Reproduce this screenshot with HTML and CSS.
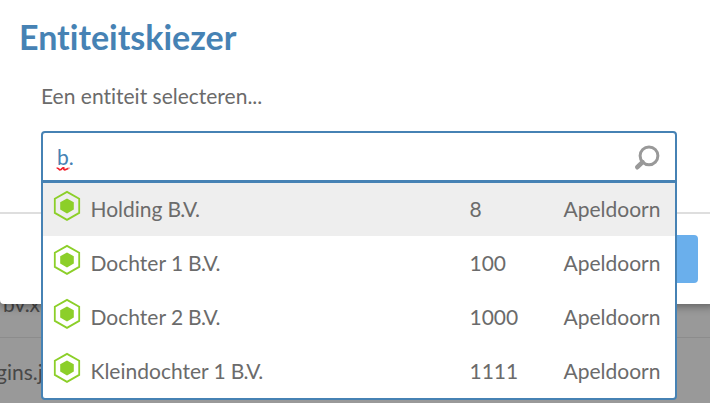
FILE: index.html
```html
<!DOCTYPE html>
<html lang="nl">
<head>
<meta charset="utf-8">
<title>Entiteitskiezer</title>
<link rel="stylesheet" href="styles.css">
</head>
<body>
<svg class="defs" width="0" height="0"><defs>
<symbol id="entity" viewBox="0 0 28 32"><path d="M14 1.9 26.2 8.7V22.9L14 29.9 1.8 22.9V8.7Z" fill="none" stroke="currentColor" stroke-width="1.8"/><path d="M14 8.5 20.8 12.2V19.6L14 23.4 7.2 19.6V12.2Z" fill="currentColor"/></symbol>
</defs></svg>
<div class="page">
  <div class="files">
    <div class="file file-bv"><span>bv.xml</span></div>
    <div class="file"><span>gins.js</span></div>
  </div>
  <section class="dialog">
    <div class="content">
      <h1 class="title">Entiteitskiezer</h1>
      <p class="label">Een entiteit selecteren...</p>
    </div>
    <footer class="footer"><button class="confirm" aria-label="OK"></button></footer>
  </section>
  <div class="picker">
    <div class="search">
      <span class="query">b.<svg class="squiggle" width="14" height="4" viewBox="0 0 14 4"><path d="M.6 1 Q2.2 1 3.1 2.3T6 1.6 7.8 1.6 10.4 2.3 12.6 1" fill="none" stroke="#f3212b" stroke-width="1.7"/></svg></span>
      <svg class="lens" width="26" height="26" viewBox="0 0 26 26" fill="none" stroke="#999"><circle cx="15" cy="10.8" r="8.9" stroke-width="3"/><path d="M8.5 17.2 3.3 22.2" stroke-width="4.6" stroke-linecap="round"/></svg>
    </div>
    <div class="options">
      <div class="option selected"><svg class="icon"><use href="#entity"/></svg><span class="name">Holding <span class="form">B.V.</span></span><span class="code">8</span><span>Apeldoorn</span></div>
      <div class="option"><svg class="icon"><use href="#entity"/></svg><span class="name">Dochter 1 <span class="form">B.V.</span></span><span class="code">100</span><span>Apeldoorn</span></div>
      <div class="option"><svg class="icon"><use href="#entity"/></svg><span class="name">Dochter 2 <span class="form">B.V.</span></span><span class="code">1000</span><span>Apeldoorn</span></div>
      <div class="option"><svg class="icon"><use href="#entity"/></svg><span class="name">Kleindochter 1 <span class="form">B.V.</span></span><span class="code">1111</span><span>Apeldoorn</span></div>
    </div>
  </div>
</div>
</body>
</html>
```
FILE: styles.css
```css
* { box-sizing: border-box; }
body { margin: 0; font: 21px/26px Lato, sans-serif; font-variant-ligatures: none; color: #6b6b6b; overflow: hidden; }
.defs { position: absolute; }
.page { position: relative; width: 710px; height: 403px; overflow: hidden; background: #999; }
.files { padding-top: 270px; color: #484848; }
.file { height: 68px; display: flex; align-items: center; border-bottom: 1px solid #8c8c8c; }
.file span { margin-left: -4px; }
.file-bv span { margin-left: 3px; }
.dialog { position: absolute; top: 0; left: 0; width: 716px; height: 304px; background: #fff; border-radius: 0 0 4px 4px; box-shadow: 0 2px 10px rgba(0,0,0,.4); }
.content { height: 214px; padding: 16px 19px; border-bottom: 2px solid #dedede; }
.title { margin: 0; font-size: 34px; line-height: 42px; font-weight: 700; color: #4682b4; }
.label { margin: 25px 22px 0; }
.footer { display: flex; justify-content: flex-end; padding: 21px 18px; }
.confirm { width: 120px; height: 48px; border: 0; border-radius: 4px; background: #6aafec; }
.picker { position: absolute; left: 41px; top: 131px; width: 636px; height: 269px; border: 2px solid #4682b4; border-radius: 4px; background: #fff; overflow: hidden; }
.search { height: 50px; display: flex; align-items: center; justify-content: space-between; padding: 0 15px 0 14px; border-bottom: 3px solid #4682b4; color: #4682b4; }
.query { position: relative; }
.squiggle { position: absolute; left: -1px; bottom: -1px; }
.lens { margin-top: 2px; }
.option { height: 54px; display: grid; grid-template-columns: 47.5px 379px 94px auto; align-items: center; }
.option.selected { height: 53px; background: #eee; }
.selected > span { margin-top: -1px; }
.form { margin-left: -.5px; letter-spacing: -.7px; }
.icon { width: 28px; height: 32px; margin: 0 0 7px 10px; color: #8ccf29; }
```
